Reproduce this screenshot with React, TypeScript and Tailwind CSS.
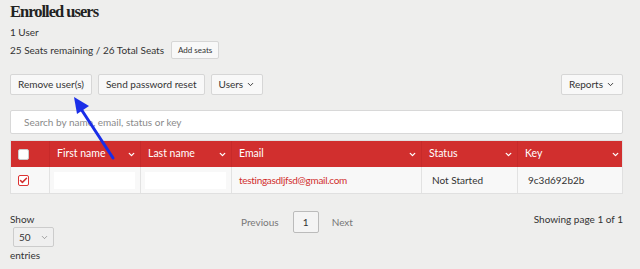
import React from "react";
import { ChevronDown, Check } from "lucide-react";

const cols = "grid grid-cols-[38px_91px_91px_190px_96px_107px]";

const HeadCell = ({ label }: { label: string }) => (
  <div className="flex items-center justify-between pl-[7px] pr-[4px] border-l border-[#c72a2a]">
    <span>{label}</span>
    <ChevronDown size={9} strokeWidth={3.5} />
  </div>
);

const Btn = ({ children }: { children: React.ReactNode }) => (
  <button className="h-[21px] px-[7px] flex items-center gap-[3px] bg-[#f8f8f8] border border-[#d6d6d6] rounded-[2px] text-[10px] text-[#333]">
    {children}
  </button>
);

export default function App() {
  return (
    <div className="relative w-[640px] h-[269px] bg-[#eeeeed] pl-[10px] pr-[17px] font-['Lato',sans-serif] text-[#333] overflow-hidden">
      <h1 className="pt-[1px] text-[16.5px] leading-[21px] font-bold tracking-[-0.06em] font-['Liberation_Serif',serif] text-[#222]">
        Enrolled users
      </h1>
      <div className="mt-[4px] text-[10px] leading-[13px]">1 User</div>
      <div className="mt-[2px] flex items-center gap-[7px] text-[10px]">
        <span>25 Seats remaining / 26 Total Seats</span>
        <button className="h-[18px] px-[6px] bg-[#f8f8f8] border border-[#d6d6d6] rounded-[2px] text-[8px] text-[#333]">
          Add seats
        </button>
      </div>

      <div className="mt-[15px] flex items-center">
        <div className="flex gap-[6px]">
          <Btn>Remove user(s)</Btn>
          <Btn>Send password reset</Btn>
          <Btn>
            Users <ChevronDown size={9} strokeWidth={2.5} />
          </Btn>
        </div>
        <div className="ml-auto">
          <Btn>
            Reports <ChevronDown size={9} strokeWidth={2.5} />
          </Btn>
        </div>
      </div>

      <div className="mt-[15px] h-[24px] bg-white border border-[#d8d8d8] rounded-[2px] flex items-center pl-[13px] text-[10px] text-[#8a8a8a]">
        Search by name, email, status or key
      </div>

      <div className="mt-[6px] border border-[#e0e0e0]">
        <div className={`${cols} h-[26px] bg-[#d12f2e] text-white text-[10.5px]`}>
          <div className="flex items-center pl-[7px]">
            <div className="w-[11px] h-[11px] bg-white rounded-[2px] border border-[#ccc]" />
          </div>
          <HeadCell label="First name" />
          <HeadCell label="Last name" />
          <HeadCell label="Email" />
          <HeadCell label="Status" />
          <HeadCell label="Key" />
        </div>
        <div className={`${cols} h-[26px] bg-[#f8f8f8] text-[10px]`}>
          <div className="flex items-center pl-[7px]">
            <div className="w-[11px] h-[11px] bg-white rounded-[2px] border border-[#d33] flex items-center justify-center text-[#d12f2e]">
              <Check size={9} strokeWidth={4} />
            </div>
          </div>
          <div className="flex items-center px-[4px] border-l border-[#e2e2e2]">
            <div className="w-[81px] h-[17px] bg-white" />
          </div>
          <div className="flex items-center px-[4px] border-l border-[#e2e2e2]">
            <div className="w-[81px] h-[17px] bg-white" />
          </div>
          <div className="flex items-center pl-[7px] border-l border-[#e2e2e2] text-[#d12f2e] tracking-[-0.03em]">
            testingasdljfsd@gmail.com
          </div>
          <div className="flex items-center pl-[10px] border-l border-[#e2e2e2]">Not Started</div>
          <div className="flex items-center pl-[10px] border-l border-[#e2e2e2]">9c3d692b2b</div>
        </div>
      </div>

      <div className="mt-[17px] flex items-start text-[10px]">
        <div className="w-[231px] pt-[1px]">
          <div className="leading-[14px]">Show</div>
          <div className="ml-[3px] mt-[1px] w-[41px] h-[20px] border border-[#ccc] rounded-[2px] flex items-center justify-between pl-[5px] pr-[4px] bg-[#efefef]">
            <span>50</span>
            <ChevronDown size={9} strokeWidth={1.5} className="text-[#666]" />
          </div>
          <div className="mt-[1px] leading-[14px]">entries</div>
        </div>
        <div className="flex items-center">
          <span className="text-[#777]">Previous</span>
          <div className="ml-[14px] w-[26px] h-[22px] border border-[#bbb] bg-[#f4f4f4] rounded-[2px] flex items-center justify-center text-[#333]">
            1
          </div>
          <span className="ml-[13px] text-[#777]">Next</span>
        </div>
        <div className="ml-auto pt-[1px]">Showing page 1 of 1</div>
      </div>

      <svg className="absolute left-0 top-0 pointer-events-none" width="640" height="269">
        <line x1="113" y1="158" x2="81" y2="109" stroke="#1a2ee8" strokeWidth="3" strokeLinecap="round" />
        <polygon points="74,97 89,106 77,114" fill="#1a2ee8" />
      </svg>
    </div>
  );
}
